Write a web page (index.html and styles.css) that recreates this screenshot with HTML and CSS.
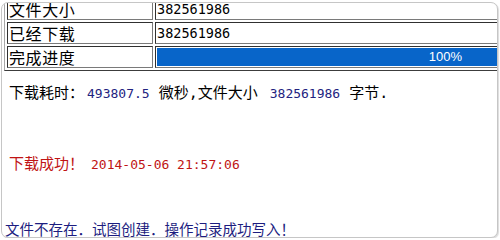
FILE: index.html
```html
<!DOCTYPE html>
<html lang="zh-CN">
<head>
<meta charset="utf-8">
<title>下载</title>
<link rel="stylesheet" href="styles.css">
</head>
<body>
<div class="frame">
  <div class="content">
    <table class="info">
      <tr><td class="label">文件大小</td><td class="value">382561986</td></tr>
      <tr><td class="label">已经下载</td><td class="value">382561986</td></tr>
      <tr><td class="label">完成进度</td><td class="progress-cell"><div class="bar" style="width:100%"><span>100%</span></div></td></tr>
    </table>
    <p class="msg">下载耗时：<span class="num">493807.5</span> 微秒,文件大小 <span class="num">382561986</span> 字节.</p>
    <p class="msg ok">下载成功！<span class="num date">2014-05-06 21:57:06</span></p>
    <p class="log">文件不存在．试图创建．操作记录成功写入！</p>
  </div>
</div>
</body>
</html>
```
FILE: styles.css
```css
html, body {
  margin: 0;
  padding: 0;
  background: #ffffff;
}
body {
  font-family: "Noto Sans CJK SC", "Liberation Sans", sans-serif;
  color: #000;
}
.frame {
  box-sizing: border-box;
  margin: 2px 0 0 1px;
  width: 497px;
  height: 236px;
  border: 1px solid #c6c6c6;
  border-radius: 7px;
  box-shadow: 1px 1px 1px #dcdcdc;
  overflow: hidden;
  background: #fff;
}
.content {
  margin-top: -8px;
  padding-left: 2px;
}
.info {
  width: 500px;
  border-collapse: separate;
  border-spacing: 2px;
  border-style: solid;
  border-width: 1px;
  border-color: #a8a8a8 #3c3c3c #3c3c3c #a8a8a8;
}
.info td {
  box-sizing: border-box;
  height: 22px;
  padding: 0 1px;
  border-style: solid;
  border-width: 1px;
  border-color: #303030 #7a7a7a #7a7a7a #303030;
  vertical-align: middle;
  line-height: 20px;
}
.label {
  width: 146px;
  font-size: 16px;
  letter-spacing: 0.6px;
}
.value {
  font-family: "DejaVu Sans Mono", monospace;
  font-size: 13.5px;
  padding-left: 2px;
}
.info td.progress-cell {
  padding: 1px;
}
.bar {
  height: 18px;
  background: #0865c9;
  display: flex;
  align-items: center;
  justify-content: flex-end;
  padding-right: 37px;
  box-sizing: border-box;
}
.bar span {
  color: #fff;
  font-family: "Liberation Sans", sans-serif;
  font-size: 13px;
}
.msg {
  margin: 11px 0 0;
  padding-left: 5px;
  font-family: "DejaVu Sans Mono", "Noto Sans CJK SC", monospace;
  font-size: 15px;
  line-height: 23px;
  white-space: nowrap;
}
.num {
  margin-left: 3px;
  font-family: "DejaVu Sans Mono", monospace;
  font-size: 13px;
  color: #23237f;
}
.msg.ok {
  margin-top: 48px;
  color: #c01414;
}
.msg.ok .num {
  color: #c01414;
}
.num.date {
  margin-left: 7px;
}
.log {
  margin: 45px 0 0;
  padding-left: 1px;
  font-family: "Noto Sans CJK SC", sans-serif;
  font-size: 14.5px;
  line-height: 16px;
  color: #1d1d80;
  white-space: nowrap;
}
```
